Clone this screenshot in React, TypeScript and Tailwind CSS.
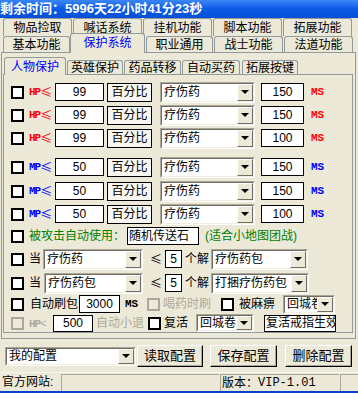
import React from 'react';

const CJK = "font-['Noto_Sans_CJK_SC',sans-serif]";

function Check({ off = false }: { off?: boolean }) {
  return (
    <span
      className={`block h-[13px] w-[13px] shrink-0 border-2 ${
        off ? 'border-[#aca899] bg-[#ECE9D8]' : 'border-black bg-white'
      }`}
    />
  );
}

function Box({ children, className = '' }: { children: React.ReactNode; className?: string }) {
  return (
    <div className={`flex shrink-0 items-center border border-black bg-white text-[12px] leading-none ${className}`}>
      {children}
    </div>
  );
}

function Combo({ value, className = '' }: { value: string; className?: string }) {
  return (
    <div className={`flex shrink-0 border border-[#aca899] border-b-white border-r-white ${className}`}>
      <div className="flex min-w-0 flex-1 border border-[#716f64] border-b-[#f1efe2] border-r-[#f1efe2] bg-white">
        <span className="min-w-0 flex-1 self-center overflow-hidden whitespace-nowrap pl-[2px] text-[12px] leading-[16px]">
          {value}
        </span>
        <span className="flex w-[16px] shrink-0 items-center justify-center border border-b-[#716f64] border-l-white border-r-[#716f64] border-t-white bg-[#ECE9D8]">
          <span className="h-0 w-0 border-x-[4px] border-t-[4px] border-x-transparent border-t-black" />
        </span>
      </div>
    </div>
  );
}

function Lt({ color }: { color: string }) {
  return <span className={`${CJK} text-[12px] ${color}`}>≤</span>;
}

const Mono = "font-['Liberation_Mono',monospace]";

const protectRows = [
  { kind: 'HP', val: '99', ms: '150' },
  { kind: 'HP', val: '99', ms: '150' },
  { kind: 'HP', val: '99', ms: '100' },
  { kind: 'MP', val: '50', ms: '150' },
  { kind: 'MP', val: '50', ms: '150' },
  { kind: 'MP', val: '50', ms: '100' },
];

const rowTops = ['mt-[6px]', 'mt-[1px]', 'mt-[1px]', 'mt-[7px]', 'mt-[2px]', 'mt-[1px]'];

export default function App() {
  return (
    <div className="flex h-[393px] w-[358px] flex-col overflow-hidden bg-[#ECE9D8] font-['Liberation_Sans','Noto_Sans_CJK_SC',sans-serif] text-black">
      {/* title */}
      <div className="h-[18px] shrink-0 bg-linear-to-b from-[#3b86f7] via-[#0a5ae6] to-[#0650d6] text-[13px] leading-[18px] font-bold text-white whitespace-nowrap">
        剩余时间：5996天22小时41分23秒
      </div>

      {/* top tabs back row */}
      <div className="flex h-[18px] shrink-0 gap-[1px] pl-[3px] text-[12px]">
        {['物品捡取', '喊话系统', '挂机功能', '脚本功能', '拓展功能'].map(t => (
          <div
            key={t}
            className="flex h-[18px] w-[69px] items-center justify-center rounded-t-[3px] border border-b-0 border-[#919b9c] bg-[#ECE9D8]"
          >
            {t}
          </div>
        ))}
      </div>

      {/* top tabs front row */}
      <div className="flex h-[16px] shrink-0 items-end pl-[3px] text-[12px]">
        <div className="flex h-[16px] w-[67px] items-center justify-center rounded-t-[3px] border border-b-0 border-[#919b9c] bg-[#ECE9D8]">
          基本功能
        </div>
        <div className="relative z-10 -mb-[1px] flex h-[20px] w-[75px] items-center justify-center rounded-t-[3px] border border-b-0 border-[#919b9c] bg-[#ECE9D8] pb-[2px] text-[#0000ff]">
          保护系统
        </div>
        <div className="ml-[1px] flex h-[16px] w-[67px] items-center justify-center rounded-t-[3px] border border-b-0 border-[#919b9c] bg-[#ECE9D8]">
          职业通用
        </div>
        <div className="ml-[1px] flex h-[16px] w-[69px] items-center justify-center rounded-t-[3px] border border-b-0 border-[#919b9c] bg-[#ECE9D8]">
          战士功能
        </div>
        <div className="ml-[1px] flex h-[16px] w-[69px] items-center justify-center rounded-t-[3px] border border-b-0 border-[#919b9c] bg-[#ECE9D8]">
          法道功能
        </div>
      </div>

      {/* outer page */}
      <div className="ml-[1px] h-[287px] w-[355px] shrink-0 border border-[#919b9c] bg-[#ECE9D8]">
        {/* sub tabs */}
        <div className="mt-[4px] flex h-[17px] items-end pl-[2px] text-[12px]">
          <div className="relative z-10 -mb-[1px] flex h-[18px] w-[62px] items-center justify-center rounded-t-[3px] border border-b-0 border-[#919b9c] bg-[#ECE9D8] text-[#0000ff]">
            人物保护
          </div>
          <div className="ml-[1px] flex h-[14px] w-[56px] items-center justify-center rounded-t-[3px] border border-b-0 border-[#919b9c] bg-[#ECE9D8]">
            英雄保护
          </div>
          <div className="ml-[1px] flex h-[14px] w-[57px] items-center justify-center rounded-t-[3px] border border-b-0 border-[#919b9c] bg-[#ECE9D8]">
            药品转移
          </div>
          <div className="ml-[1px] flex h-[14px] w-[58px] items-center justify-center rounded-t-[3px] border border-b-0 border-[#919b9c] bg-[#ECE9D8]">
            自动买药
          </div>
          <div className="ml-[2px] flex h-[14px] w-[56px] items-center justify-center rounded-t-[3px] border border-b-0 border-[#919b9c] bg-[#ECE9D8]">
            拓展按键
          </div>
        </div>

        {/* inner page */}
        <div className="ml-[1px] flex h-[259px] w-[350px] flex-col border border-[#919b9c] bg-[#ECE9D8] pl-[7px] text-[12px]">
          {protectRows.map((r, i) => {
            const color = r.kind === 'HP' ? 'text-[#ff0000]' : 'text-[#0000ff]';
            return (
              <div key={i} className={`flex h-[22px] shrink-0 items-center ${rowTops[i]}`}>
                <Check />
                <span className={`ml-[5px] flex w-[26px] shrink-0 items-center ${color}`}>
                  <span className={`${Mono} text-[11px] font-bold tracking-[-1px]`}>{r.kind}</span>
                  <Lt color={color} />
                </span>
                <Box className="h-[18px] w-[49px] justify-center">{r.val}</Box>
                <div className="ml-[3px] flex h-[19px] w-[45px] shrink-0 items-center justify-center border border-black bg-[#f7f6f1]">
                  百分比
                </div>
                <Combo value="疗伤药" className="ml-[8px] h-[21px] w-[95px]" />
                <Box className="ml-[6px] h-[18px] w-[43px] justify-center">{r.ms}</Box>
                <span className={`ml-[7px] ${Mono} text-[11px] font-bold ${color}`}>MS</span>
              </div>
            );
          })}

          {/* on attack */}
          <div className="flex h-[22px] shrink-0 items-center">
            <Check />
            <span className="ml-[5px] w-[96px] shrink-0 whitespace-nowrap text-[#008000]">被攻击自动使用：</span>
            <Box className="ml-[2px] h-[18px] w-[72px] overflow-hidden whitespace-nowrap pl-[1px]">随机传送石</Box>
            <span className="ml-[6px] whitespace-nowrap text-[#008000]">(适合小地图团战)</span>
          </div>

          {/* unpack rows */}
          <div className="mt-[1px] flex h-[22px] shrink-0 items-center">
            <Check />
            <span className="ml-[5px] w-[12px] shrink-0">当</span>
            <Combo value="疗伤药" className="ml-[2px] h-[21px] w-[100px]" />
            <span className="ml-[7px] w-[10px] shrink-0"><Lt color="text-black" /></span>
            <Box className="ml-[5px] h-[18px] w-[17px] justify-center">5</Box>
            <span className="ml-[3px] w-[24px] shrink-0">个解</span>
            <Combo value="疗伤药包" className="ml-[2px] h-[21px] w-[97px]" />
          </div>
          <div className="mt-[2px] flex h-[22px] shrink-0 items-center">
            <Check />
            <span className="ml-[5px] w-[12px] shrink-0">当</span>
            <Combo value="疗伤药包" className="ml-[3px] h-[21px] w-[99px]" />
            <span className="ml-[7px] w-[10px] shrink-0"><Lt color="text-black" /></span>
            <Box className="ml-[5px] h-[18px] w-[17px] justify-center">5</Box>
            <span className="ml-[3px] w-[24px] shrink-0">个解</span>
            <Combo value="打捆疗伤药包" className="ml-[2px] h-[21px] w-[98px]" />
          </div>

          {/* auto refresh */}
          <div className="flex h-[20px] shrink-0 items-center">
            <Check />
            <span className="ml-[6px] w-[49px] shrink-0">自动刷包</span>
            <Box className="h-[18px] w-[41px] justify-center">3000</Box>
            <span className={`ml-[5px] w-[13px] shrink-0 ${Mono} text-[11px] font-bold`}>MS</span>
            <span className="ml-[9px]"><Check off /></span>
            <span className="ml-[3px] w-[49px] shrink-0 text-[#aca899]">喝药时刷</span>
            <span className="ml-[9px]"><Check /></span>
            <span className="ml-[5px] w-[37px] shrink-0">被麻痹</span>
            <Combo value="回城卷" className="ml-[7px] h-[19px] w-[52px]" />
          </div>

          {/* relog */}
          <div className="flex h-[18px] shrink-0 items-center">
            <Check off />
            <span className={`ml-[5px] w-[19px] shrink-0 text-[#aca899]`}>
              <span className={`${Mono} text-[11px] font-bold tracking-[-1px]`}>HP</span>
              <span className="text-[11px]">&lt;</span>
            </span>
            <Box className="ml-[5px] h-[17px] w-[40px] justify-center">500</Box>
            <span className="ml-[3px] w-[49px] shrink-0 text-[#aca899]">自动小退</span>
            <span className="ml-[3px]"><Check /></span>
            <span className="ml-[3px] w-[25px] shrink-0">复活</span>
            <Combo value="回城卷" className="ml-[7px] h-[18px] w-[58px]" />
            <Box className="ml-[10px] h-[17px] w-[72px] overflow-hidden whitespace-nowrap pl-[1px]">复活戒指生效</Box>
          </div>
        </div>
      </div>

      {/* config row */}
      <div className="mt-[6px] flex h-[22px] shrink-0 items-center pl-[5px] text-[13px]">
        <Combo value="我的配置" className="h-[19px] w-[131px]" />
        <button className="ml-[1px] h-[22px] w-[66px] border border-b-black border-l-white border-r-black border-t-white bg-[#ECE9D8] shadow-[inset_-1px_-1px_0_#aca899]">
          读取配置
        </button>
        <button className="ml-[7px] h-[22px] w-[67px] border border-b-black border-l-white border-r-black border-t-white bg-[#ECE9D8] shadow-[inset_-1px_-1px_0_#aca899]">
          保存配置
        </button>
        <button className="ml-[8px] h-[22px] w-[67px] border border-b-black border-l-white border-r-black border-t-white bg-[#ECE9D8] shadow-[inset_-1px_-1px_0_#aca899]">
          删除配置
        </button>
      </div>

      {/* status bar */}
      <div className="mt-[5px] flex h-[19px] shrink-0 border-t border-[#f7f6f1] pt-[1px] text-[12px]">
        <span className="w-[61px] shrink-0 pl-[2px] leading-[17px]">官方网站:</span>
        <div className="w-[158px] shrink-0 border-l border-t border-[#aca899]" />
        <div className="ml-[1px] flex w-[119px] shrink-0 items-center border-l border-t border-[#aca899] pl-[1px] whitespace-nowrap">
          版本：<span className={`${Mono} text-[12px]`}>VIP-1.01</span>
        </div>
        <div className="ml-[1px] flex-1 border-l border-t border-[#aca899]" />
      </div>
      <div className="h-[2px] shrink-0 bg-[#0a3fcf]" />
    </div>
  );
}
